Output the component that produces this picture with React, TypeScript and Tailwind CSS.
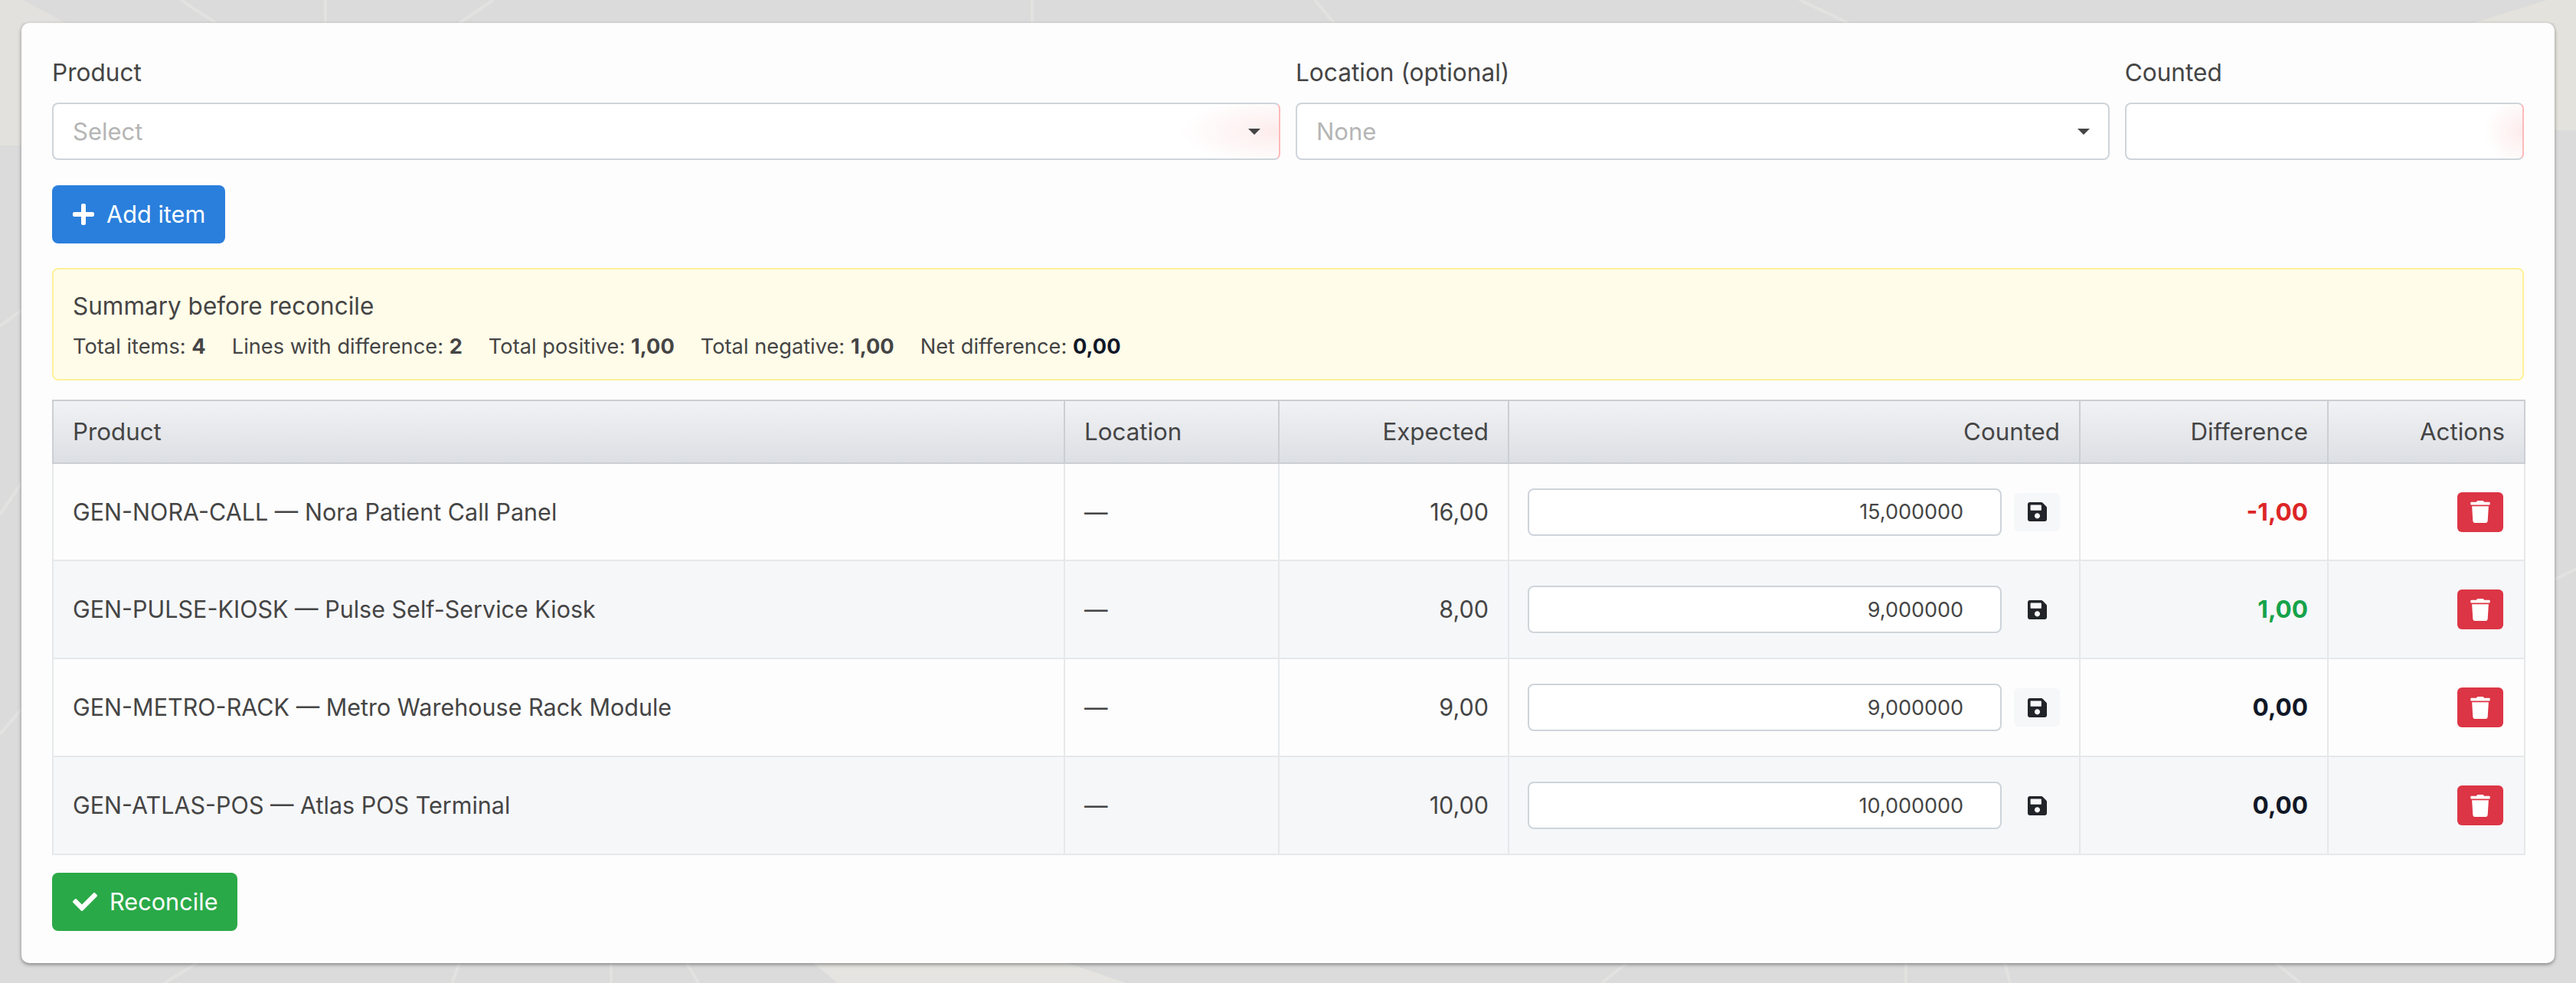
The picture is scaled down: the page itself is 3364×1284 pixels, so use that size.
import { FaCheck, FaPlus, FaSave, FaTrash } from "react-icons/fa";

const ROWS = [
  { name: "GEN-NORA-CALL — Nora Patient Call Panel", expected: "16,00", counted: "15,000000", diff: "-1,00", tone: "text-[#dc2626]", height: "h-[127px]" },
  { name: "GEN-PULSE-KIOSK — Pulse Self-Service Kiosk", expected: "8,00", counted: "9,000000", diff: "1,00", tone: "text-[#16a34a]", height: "h-[128px]" },
  { name: "GEN-METRO-RACK — Metro Warehouse Rack Module", expected: "9,00", counted: "9,000000", diff: "0,00", tone: "text-[#111827]", height: "h-[128px]" },
  { name: "GEN-ATLAS-POS — Atlas POS Terminal", expected: "10,00", counted: "10,000000", diff: "0,00", tone: "text-[#111827]", height: "h-[128px]" },
];

const TH = "border-2 border-[#cbced2] px-[25px] text-[31.3px] font-normal";
const TD = "border-2 border-[#e6e8ea] px-[25px]";

function Caret() {
  return (
    <svg viewBox="0 0 16 8" className="absolute right-[24px] top-[32px] h-2 w-4 fill-[#444444]">
      <path d="M0 0h16L8 8z" />
    </svg>
  );
}

function Background() {
  const streaks = [
    "M236 0L282 30", "M425 0V30", "M644 0L600 30", "M1348 0V30", "M1717 0L1742 30", "M2350 0L2414 30",
    "M0 426L28 405", "M0 672L28 631", "M0 959L28 926", "M3336 757L3364 743",
    "M257 1258L215 1284", "M600 1258L590 1284", "M798 1258V1284", "M897 1258L912 1284",
    "M2124 1258L2092 1284", "M2489 1258V1284", "M2618 1258L2625 1284", "M2972 1258L3004 1284",
  ];
  return (
    <svg viewBox="0 0 3364 1284" className="absolute inset-0 h-full w-full">
      <path d="M0 0H30L86 30H28V190H0Z" fill="#e3e1dd" />
      <path d="M3326 0H3364V170H3336V30H3230Z" fill="#e3e2dc" />
      <path d="M1062 1258H1395L1470 1284H1094Z" fill="#e5e4e0" />
      {streaks.map((d) => (
        <path key={d} d={d} stroke="#e2e2e0" strokeWidth="4" fill="none" />
      ))}
    </svg>
  );
}

export default function App() {
  return (
    <div className="relative h-[1284px] w-[3364px] overflow-hidden bg-[#dbdbdb] pt-[30px] pl-[28px] font-['Inter',sans-serif] text-[30.5px] text-[#454545]">
      <Background />
      <div className="relative h-[1228px] w-[3308px] rounded-[10px] bg-[#fdfdfd] px-[40px] pt-[42px] shadow-[0_2px_5px_rgba(0,0,0,0.4)]">
        {/* Add item form */}
        <div className="grid grid-cols-12 gap-x-5">
          <div className="col-span-6">
            <div className="mb-[17px] h-[45px] text-[31.6px] leading-[45px]">Product</div>
            <div className="relative h-[75px] rounded-[8px] border-2 border-[#ced4da] border-r-[#ffb9b9] bg-[radial-gradient(ellipse_130px_45px_at_100%_50%,#fdecec,#ffffff)] pl-[25px] text-[31px] leading-[72px] text-[#b5b5b5]">
              Select
              <Caret />
            </div>
          </div>
          <div className="col-span-4">
            <div className="mb-[17px] h-[45px] text-[31.6px] leading-[45px]">Location (optional)</div>
            <div className="relative h-[75px] rounded-[8px] border-2 border-[#ced4da] bg-white pl-[25px] text-[31px] leading-[72px] text-[#b5b5b5]">
              None
              <Caret />
            </div>
          </div>
          <div className="col-span-2">
            <div className="mb-[17px] h-[45px] text-[31.6px] leading-[45px]">Counted</div>
            <div className="h-[75px] rounded-[8px] border-2 border-[#ced4da] border-r-[#ffb9b9] bg-[radial-gradient(ellipse_50px_45px_at_100%_50%,#fdecec,#ffffff)]" />
          </div>
        </div>

        <button className="mt-[33px] flex h-[76px] w-[226px] items-center rounded-[8px] bg-[#2a7fdc] pl-[27px] text-[30.7px] text-white">
          <FaPlus className="mr-[16px] h-[32px] w-[28px]" />
          Add item
        </button>

        {/* Summary */}
        <div className="mt-[32px] h-[147px] rounded-[8px] border-2 border-[#fff09a] bg-[#fffce9] px-[25px] pt-[27px]">
          <div className="h-[42px] text-[31.5px] leading-[42px]">Summary before reconcile</div>
          <div className="mt-[11px] flex gap-[34px] text-[27.25px] leading-[42px]">
            <span>Total items: <b className="font-bold">4</b></span>
            <span>Lines with difference: <b className="font-bold">2</b></span>
            <span>Total positive: <b className="font-bold">1,00</b></span>
            <span>Total negative: <b className="font-bold">1,00</b></span>
            <span>Net difference: <b className="font-bold text-[#111827]">0,00</b></span>
          </div>
        </div>

        {/* Lines */}
        <table className="mt-[25px] w-[3228px] table-fixed border-collapse">
          <colgroup>
            <col className="w-[1321px]" />
            <col className="w-[280px]" />
            <col className="w-[300px]" />
            <col className="w-[746px]" />
            <col className="w-[324px]" />
            <col className="w-[257px]" />
          </colgroup>
          <thead>
            <tr className="h-[82px] bg-gradient-to-b from-[#f1f2f4] to-[#dcdfe4]">
              <th className={`${TH} text-left`}>Product</th>
              <th className={`${TH} text-left`}>Location</th>
              <th className={`${TH} text-right`}>Expected</th>
              <th className={`${TH} text-right`}>Counted</th>
              <th className={`${TH} text-right`}>Difference</th>
              <th className={`${TH} text-right`}>Actions</th>
            </tr>
          </thead>
          <tbody>
            {ROWS.map((row, i) => (
              <tr key={row.name} className={`${row.height} ${i % 2 === 1 ? "bg-[#f6f7f9]" : "bg-[#fdfdfd]"}`}>
                <td className={TD}>{row.name}</td>
                <td className={TD}>—</td>
                <td className={`${TD} text-right`}>{row.expected}</td>
                <td className={`${TD} pl-[24px]`}>
                  <div className="flex items-center gap-[16px]">
                    <input
                      readOnly
                      value={row.counted}
                      className="h-[62px] w-[620px] rounded-[8px] border-2 border-[#ced4da] bg-white pr-[48px] text-right text-[27px] text-[#454545] outline-none"
                    />
                    <button className="flex h-[50px] w-[60px] items-center justify-center rounded-[6px] bg-[#f6f7f9] text-[#212529]">
                      <FaSave className="h-[29px] w-[25px]" />
                    </button>
                  </div>
                </td>
                <td className={`${TD} text-right text-[31.5px] font-bold ${row.tone}`}>{row.diff}</td>
                <td className={TD}>
                  <button className="ml-auto mr-[2px] flex h-[52px] w-[60px] items-center justify-center rounded-[6px] bg-[#dc3545] text-white">
                    <FaTrash className="h-[29px] w-[26px]" />
                  </button>
                </td>
              </tr>
            ))}
          </tbody>
        </table>

        <button className="mt-[23px] flex h-[76px] w-[242px] items-center rounded-[8px] bg-[#2aa948] pl-[27px] text-[30.7px] text-white">
          <FaCheck className="mr-[16px] h-[32px] w-[32px]" />
          Reconcile
        </button>
      </div>
    </div>
  );
}
